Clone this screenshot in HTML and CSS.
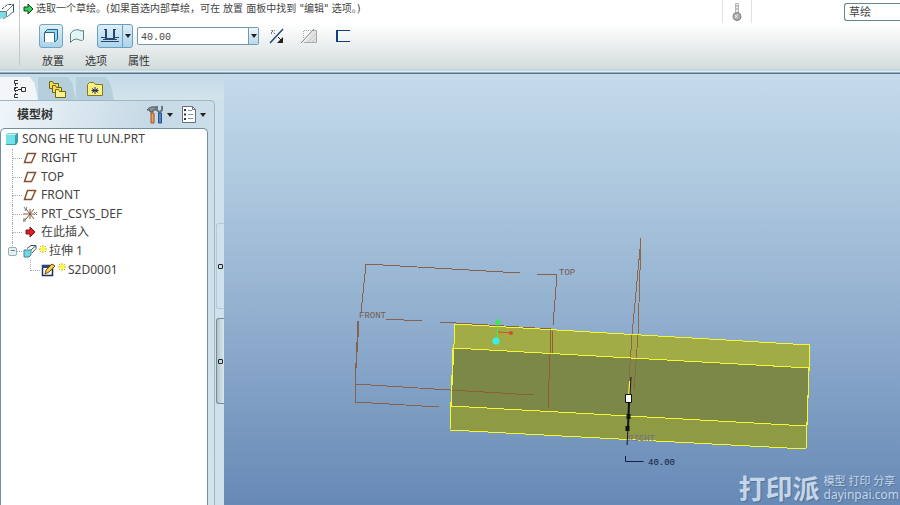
FILE: index.html
```
<!DOCTYPE html>
<html lang="zh-CN">
<head>
<meta charset="utf-8">
<title>SONG_HE_TU_LUN</title>
<link rel="stylesheet" href="styles.css">
</head>
<body>
<header class="ribbon">
  <div class="feature">
    <svg width="16" height="22" viewBox="0 0 16 22" fill="none" stroke="#2b4a55">
      <path d="M0 11h6v6L0 19z" fill="#7fdbe4" stroke="none"/>
      <path d="M0 11.500h6.500v5L3 19M6.500 11.500 13.500 4.500v7L7 17" stroke="#5b8088"/>
      <path d="M2 9 7.500 4.500h6v8" stroke-dasharray="3 1"/>
    </svg>
  </div>
  <div class="dashboard">
    <p class="message">
      <svg width="11" height="12" viewBox="0 0 11 12"><path d="M1 4h4V1l5 5-5 5V8H1z" fill="#2fd35a" stroke="#173d20"/></svg>
      <span>选取一个草绘。(如果首选内部草绘，可在 放置 面板中找到 "编辑" 选项。)</span>
    </p>
    <div class="controls">
      <button class="tool active" aria-label="拉伸为实体">
        <svg width="16" height="16" viewBox="0 0 16 16"><path d="M1 4 4 1h11v10l-3 3V4z" fill="#8fdde8"/><path d="M2 4h10v10H2z" fill="#fff"/><path d="M1.500 14V4.500h10V14M2 4 4.500 1.500h10V11L12 14" fill="none" stroke="#28658a"/></svg>
      </button>
      <button class="tool" aria-label="拉伸为曲面">
        <svg width="16" height="16" viewBox="0 0 16 16"><path d="M1.500 14.500v-9C4 1.500 9 1 11 2.500q2 1 3.500 0v9C12 14 10 11 7 11q-3 0-5.500 3.500z" fill="#e2f4f4" stroke="#5a8288"/></svg>
      </button>
      <div class="split">
        <button class="split-main" aria-label="深度">
          <svg width="18" height="16" viewBox="0 0 18 16" fill="none" stroke="#27476c"><path d="M0 9.500h4m10 0h4M0 13.500h18M2 11.500h2m10 0h2"/><path d="M5 1v10h8V1" stroke-width="2"/><path d="M3 1.500h3M12 1.500h3"/></svg>
        </button>
        <button class="split-arrow" aria-label="深度选项"><span class="caret"></span></button>
      </div>
      <div class="combo">
        <input type="text" value="40.00" aria-label="深度值">
        <button class="combo-arrow" aria-label="最近值"><span class="caret"></span></button>
      </div>
      <button class="tool flip" aria-label="反向">
        <svg width="18" height="16" viewBox="0 0 18 16"><path d="M2 15 15 1" stroke="#1e4880" stroke-width="1.500"/><path d="M3.500 6V2.500H7M4 3l3 3" fill="none" stroke="#777" stroke-dasharray="2 1"/><path d="m10 9 4 4" stroke="#222"/><path d="M15 9v6H9z" fill="#222"/></svg>
      </button>
      <button class="tool" aria-label="移除材料" disabled>
        <svg width="18" height="16" viewBox="0 0 18 16" fill="none" stroke="#a5abaa"><path d="M14 2h3v12H5z" fill="#dfe3e2" stroke="none"/><path d="M13 2.500h3.500v12H4"/><path d="M3.500 10V2.500H12" stroke-dasharray="1 1"/><path d="m8 14 8-8M12 14l4-4" stroke="#c3c8c7"/><path d="M1 15 14 1" stroke="#777e7d"/></svg>
      </button>
      <button class="tool thicken" aria-label="加厚草绘">
        <svg width="16" height="16" viewBox="0 0 16 16"><path d="M15 2.500H2M2 13.500h13" stroke="#123f7c"/><path d="M2 2v12" stroke="#123f7c" stroke-width="2"/></svg>
      </button>
    </div>
    <nav class="panels"><a href="#place">放置</a><a href="#options">选项</a><a href="#props">属性</a></nav>
  </div>
  <div class="status">
    <svg width="10" height="20" viewBox="0 0 10 20"><path d="M3.500 1.500h3v10h-3z" fill="#eee" stroke="#b5b5b5"/><path d="M4 4h2m-2 3h2" stroke="#999"/><circle cx="5" cy="14.500" r="4" fill="#aaa" stroke="#858585"/><path d="m3 13 3 3m0-4-3 4" stroke="#eee"/></svg>
  </div>
  <select class="filter" aria-label="选择过滤器"><option>草绘</option></select>
</header>
<main class="work">
  <aside class="navigator">
    <div class="tabs">
      <button class="tab current" aria-label="模型树">
        <svg width="14" height="20" viewBox="0 0 14 20" fill="none" stroke="#333"><path d="M3.500 5v10" stroke-dasharray="2 1"/><path d="M6 1.500H2.500v3H6M6 8.500H2.500v3H6M6 18.500H2.500v-3H6M6 10.500h3M9.500 8.500h4v4h-4z"/></svg>
      </button>
      <button class="tab" aria-label="文件夹浏览器">
        <svg width="18" height="18" viewBox="0 0 18 18" fill="#f4e04e" stroke="#6d641c"><path d="M1.500 8.500v-7h3l1 2h5v5z"/><path d="M4.500 12.500v-7h3l1 2h5v5z"/><path d="M7.500 17.500v-8h3l1 2h6v6z" fill="#fbf08a"/></svg>
      </button>
      <button class="tab" aria-label="收藏夹">
        <svg width="16" height="16" viewBox="0 0 16 16"><path d="M.5 14.500v-11l2-2h4l2 2h7v11z" fill="#faf07c" stroke="#83782a"/><path d="M8 6v7M5 7.500l6 4m0-4-6 4M4.500 9.500h7" stroke="#20306e"/></svg>
      </button>
    </div>
    <section class="panel">
      <div class="panel-head">
        <h1>模型树</h1>
        <button class="menu" aria-label="设置">
          <svg width="18" height="19" viewBox="0 0 18 19"><path d="M1 5q3-4 9-3v3H7v2H4V5z" fill="#8b9698" stroke="#4c5558"/><path d="M5 8h3v10H5z" fill="#f0a05c" stroke="#98532a"/><path d="M11 1v4l2 2h1l2-2V1" fill="none" stroke="#68777e" stroke-width="2"/><path d="M12.500 8h3v10h-3z" fill="#5485c6" stroke="#2d5085"/></svg>
          <span class="caret"></span>
        </button>
        <button class="menu" aria-label="显示">
          <svg width="16" height="19" viewBox="0 0 16 19"><path d="M1.500 1.500h10l3 3v13h-13z" fill="#fff" stroke="#64717c"/><path d="M11.500 1.500v3h3" fill="none" stroke="#64717c"/><path d="M3 5h2M3 9.500h2M3 14h2" stroke="#334" stroke-width="2"/><path d="M7 5.500h4M7 9.500h5M7 13.500h5" stroke="#7d98b6"/></svg>
          <span class="caret"></span>
        </button>
      </div>
      <div class="tree-box">
      <ul class="tree">
        <li class="root"><svg width="14" height="14" viewBox="0 0 14 14"><path d="M1 3 3 1h10v9l-2 3H1z" fill="#3e9da7"/><path d="M1 3h9v9H1z" fill="#72e3e5"/><path d="M1.500 3 3 1.500h9L10.500 3z" fill="#c4f7f6"/></svg><span>SONG HE TU LUN.PRT</span></li>
        <li class="node"><svg width="14" height="12" viewBox="0 0 14 12"><path d="M4.500 1.500h8l-4 9h-7z" fill="none" stroke="#875130" stroke-width="1.500"/></svg><span>RIGHT</span></li>
        <li class="node"><svg width="14" height="12" viewBox="0 0 14 12"><path d="M4.500 1.500h8l-4 9h-7z" fill="none" stroke="#875130" stroke-width="1.500"/></svg><span>TOP</span></li>
        <li class="node"><svg width="14" height="12" viewBox="0 0 14 12"><path d="M4.500 1.500h8l-4 9h-7z" fill="none" stroke="#875130" stroke-width="1.500"/></svg><span>FRONT</span></li>
        <li class="node"><svg width="14" height="16" viewBox="0 0 14 16"><path d="M0 8h11M7 3v10M3 3l8 10M11 3 3 13" fill="none" stroke="#87583a"/><path d="m1 1 2 3M4 1 2 5M11 6l3 3m0-3-3 3M0 13h3l-3 2h3" fill="none" stroke="#777"/></svg><span>PRT_CSYS_DEF</span></li>
        <li class="node"><svg width="14" height="12" viewBox="0 0 14 12"><path d="M3 4h4V1l5 5-5 5V8H3z" fill="#e31d25" stroke="#74171b"/></svg><span>在此插入</span></li>
        <li class="node open">
          <button class="toggle" aria-label="折叠">−</button>
          <svg width="14" height="14" viewBox="0 0 14 14"><path d="M1 6h7v5l-2 2H1z" fill="#75d6df" stroke="#3c8993"/><path d="M4 4.500 8 1.500h5v3L9 9M8 6l5-4.500" fill="none" stroke="#38535c"/></svg>
          <svg class="star" width="8" height="8" viewBox="0 0 8 8"><path d="M4 0v8M0 4h8M1 1l6 6m0-6L1 7" stroke="#c5b800"/><path d="M2 2h4v4H2z" fill="#ff3"/></svg>
          <span>拉伸 1</span>
        </li>
        <li class="leaf">
          <svg width="15" height="14" viewBox="0 0 15 14"><path d="M1.500 2.500h10v10h-10z" fill="#fff" stroke="#1b2f57" stroke-width="1.500"/><path d="M1 2h9v3H1z" fill="#2b467c"/><path d="m4 11 1-4 6-6 3 2-6 6z" fill="#f4cf48" stroke="#694c1b"/></svg>
          <svg class="star" width="8" height="8" viewBox="0 0 8 8"><path d="M4 0v8M0 4h8M1 1l6 6m0-6L1 7" stroke="#c5b800"/><path d="M2 2h4v4H2z" fill="#ff3"/></svg>
          <span>S2D0001</span>
        </li>
      </ul>
      </div>
    </section>
    <div class="sashes"><button class="sash" aria-label="隐藏导航器"></button><button class="sash deep" aria-label="展开导航器"></button></div>
  </aside>
  <section class="viewport">
    <svg class="model" viewBox="224 74 676 431" fill="none">
      <path d="M455 324 810 345 809 368 453 348z" fill="#a2ac47"/>
      <path d="M453 348 809 368 807 426 451 406z" fill="#7c8847"/>
      <path d="M451 406 807 426 806 449 450 430z" fill="#8f9a44"/>
      <g stroke="#86624c" shape-rendering="crispEdges">
        <path d="m361 313 5-49 154 9m17 1 20 1-4 50M386 319l36 2m18 1 111 7M358 321l-3 63v18l84 5M359 321l-4 63 95 6"/>
        <path d="m450 390 84 5M551 329l-1 25-2 55M552 331v23" stroke="#8b6130"/>
        <path d="m641 238-9 97-4 60M641 238l-3 97-4 55" stroke="#8b6848"/>
      </g>
      <g stroke="#f5f634" shape-rendering="crispEdges">
        <path d="m455 324 355 21M453 348l356 20M451 406l356 20M450 430l356 19M455 324l-4 82M453 348l-3 82M810 345l-3 81M809 368l-3 81"/>
      </g>
      <path d="m498 321-1 18" stroke="#45ec4b"/><path d="m498 318 3 6h-6z" fill="#2cf341"/>
      <path d="m498 332 14 1" stroke="#d94a28"/><circle cx="511" cy="333" r="2" fill="#d94a28"/><circle cx="496" cy="341" r="3.500" fill="#39f0e8"/>
      <path d="m630 381-1 14" stroke="#f6ef6a" stroke-width="2"/><path d="m631 377-1 17" stroke="#111"/>
      <path d="m629 402-1 27" stroke="#10131a" stroke-width="2"/><path d="m628 428-1 17" stroke="#10131a"/>
      <path d="M626.500 414h4v5h-4zM625.500 426h4v5h-4z" fill="#10131a"/>
      <path d="M625.500 394.500h6v8h-6z" fill="#fff" stroke="#111"/>
      <path d="M625.500 456v5.500h18" stroke="#17204a"/>
      <g class="labels"><text x="559" y="275">TOP</text><text x="359" y="318">FRONT</text><text class="right" x="628" y="441">RIGHT</text><text class="dim" x="648" y="465">40.00</text></g>
    </svg>
    <div class="mark"><strong>打印派</strong><p><span>模型 打印 分享</span><span class="site">dayinpai.com</span></p></div>
  </section>
</main>
</body>
</html>
```
FILE: styles.css
```
* { box-sizing: border-box; }
body {
  margin: 0;
  min-height: 100vh;
  display: flex;
  flex-direction: column;
  font: 11px/18px "Noto Sans", "Noto Sans CJK SC", sans-serif;
  color: #444;
  overflow-x: hidden;
}
button, input, select { font: inherit; color: inherit; margin: 0; padding: 0; }
button { border: 0; background: none; display: flex; align-items: center; justify-content: center; }
svg { flex: none; display: block; }
p, h1, ul { margin: 0; padding: 0; }

.ribbon {
  display: flex;
  align-items: flex-start;
  height: 74px;
  background: linear-gradient(#fff 0, #fff 24px, #d3dcdc 69px, #b9cdd6 70px, #dcedf4 71px, #dcedf4 72px, #54728c 73px);
}
.feature { width: 20px; height: 66px; border-right: 1px solid #c3c9c9; }
.dashboard { flex: 1; padding-left: 3px; }
.message { display: flex; align-items: center; gap: 2px; font: 10px/18px "DejaVu Sans", "Noto Sans CJK SC", sans-serif; }
.controls { display: flex; align-items: center; height: 32px; padding: 3px 0 0 16px; }
.tool { width: 24px; height: 24px; margin-right: 2px; }
.active { border: 1px solid #71a5c6; border-radius: 3px; background: linear-gradient(#e1f0f7, #aad2e9); }
.split {
  display: flex;
  width: 36px;
  height: 24px;
  margin: 0 4px 0 6px;
  border: 1px solid #6b9fbe;
  border-radius: 3px;
  background: linear-gradient(#dceef7, #acd4ea);
}
.split-main { flex: 1; }
.split-arrow { width: 10px; border-left: 1px solid #6b9fbe; }
.caret { border: 3px solid transparent; border-top: 4px solid #222; border-bottom: 0; }
.combo { display: flex; width: 122px; height: 18px; margin-right: 6px; border: 1px solid #7797ad; border-radius: 2px; background: #fff; }
.combo input { flex: 1; min-width: 0; padding: 3px 0 0 3px; border: 0; background: none; font: 10px "Liberation Mono", monospace; }
.combo-arrow { width: 10px; border-left: 1px solid #7797ad; background: linear-gradient(#edf6fa, #b9daeb); }
.flip { margin-right: 8px; }
.thicken { margin-left: 8px; }
.panels { display: flex; gap: 21px; padding: 2px 0 0 19px; }
.panels a { color: #333; text-decoration: none; }
.status { width: 30px; height: 23px; margin-right: 92px; padding: 2px 9px; border: solid #e5dfe2; border-width: 0 1px; }
.filter { appearance: none; width: 56px; height: 18px; margin-top: 3px; padding-left: 4px; border: 1px solid #668688; border-right: 0; border-radius: 3px 0 0 3px; background: #fff; line-height: 14px; }

.work { flex: 1; display: flex; }
.navigator {
  display: grid;
  grid-template: 26px 1fr / 215px 9px;
  background: #cddfe9;
  width: 224px;
}
.tabs { display: flex; grid-column: 1 / 3; padding-top: 3px; background: linear-gradient(#c4dbe7, #d4e3ea); }
.tab { width: 38px; background: #b6cfdd; clip-path: polygon(0 0, 78% 0, 90% 25%, 100% 100%, 0 100%); }
.tab.current { background: #f2f6f9; }
.panel {
  display: flex;
  flex-direction: column;
  padding-right: 6px;
  border: solid #9fb7c2;
  border-width: 1px 1px 0 0;
  border-top-right-radius: 5px;
  background: linear-gradient(100deg, #f0f5f9, #c5d9e6 150px, #d3e3ec);
}
.panel-head { display: flex; align-items: center; height: 27px; padding-right: 2px; }
h1 { flex: 1; padding-left: 17px; font-size: 12px; line-height: 18px; color: #333; }
.menu { gap: 3px; margin-left: 8px; }
.tree-box {
  flex: 1;
  padding-top: 1px;
  border: 1px solid #708f9b;
  border-bottom: 0;
  border-radius: 5px 5px 0 0;
  background: #fff;
}
.tree { display: grid; grid-auto-rows: 1fr; min-height: 149px; list-style: none; }
.tree li { position: relative; display: flex; align-items: center; font-size: 12px; }
.tree .root { gap: 3px; padding-left: 4px; }
.node { gap: 4px; padding-left: 22px; }
.node::before, .leaf::before { content: ""; position: absolute; top: 0; left: 11px; width: 9px; height: 50%; border: dotted #aaa; border-width: 0 0 1px 1px; }
.node:not(.open)::after { content: ""; position: absolute; top: 50%; bottom: 0; left: 11px; border-left: 1px dotted #aaa; }
.tree .leaf { gap: 2px; padding-left: 40px; }
.leaf::before { left: 29px; }
.tree .open { gap: 2px; }
.star { align-self: flex-start; margin-top: 3px; }
.toggle { position: absolute; left: 7px; z-index: 1; width: 9px; height: 9px; border: 1px solid #91b1b7; border-radius: 2px; background: #e7f1f3; font-size: 9px; line-height: 6px; }
.sashes { display: flex; flex-direction: column; gap: 9px; padding: 123px 0 0 1px; background: #cfe1ea; }
.sash { height: 86px; border: 1px solid #b4c9d2; border-right: 0; border-radius: 3px 0 0 3px; }
.sash::before { content: ""; width: 3px; height: 3px; border: 1px solid #222; border-radius: 1px; }
.deep { border-color: #788a91; background: linear-gradient(90deg, #b4c5cc, #d9e8ee); }

.viewport { flex: 1; position: relative; min-width: 0; background: linear-gradient(#c5dbeb, #a4c0d9 36%, #8ba9cb 63%, #6789b5); }
.model { width: 100%; height: 100%; }
.labels { font: 9px "Liberation Mono", monospace; fill: #765c50; }
.labels .right { fill: #746a91; }
.labels .dim { fill: #151a3b; }
.mark { position: absolute; right: 1px; bottom: 0; display: flex; align-items: center; gap: 4px; color: #c4d6e8; text-shadow: 1px 1px 1px #526f96; }
.mark strong { font-size: 27px; line-height: 32px; }
.mark p { display: grid; padding-bottom: 2px; }
.mark span { font-size: 11px; line-height: 14px; }
.mark .site { font-size: 12px; line-height: 14px; }
```
